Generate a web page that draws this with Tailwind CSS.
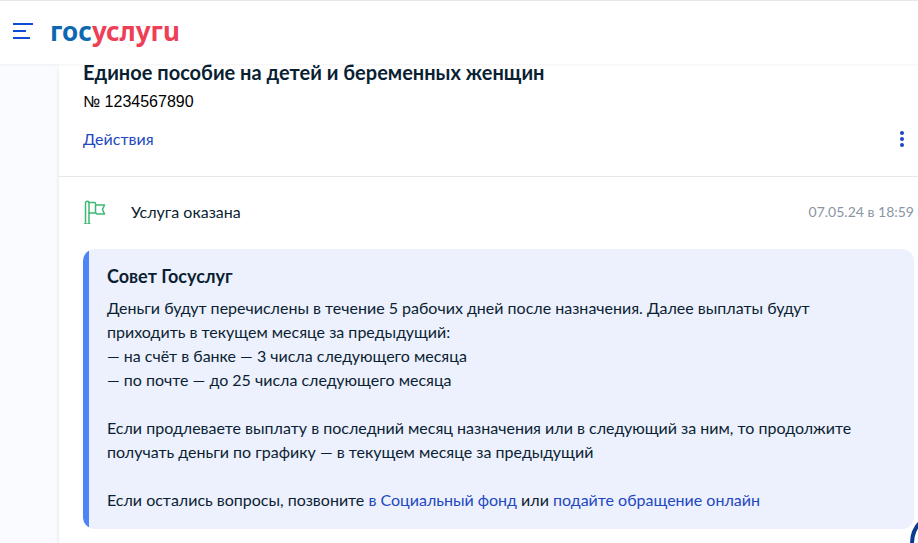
<!DOCTYPE html>
<html lang="ru">
  <head>
    <meta charset="UTF-8" />
    <meta name="viewport" content="width=device-width, initial-scale=1.0" />
    <title>Госуслуги</title>
    <script src="https://cdn.jsdelivr.net/npm/@tailwindcss/browser@4"></script>
  </head>
  <body
    class="flex flex-col min-h-screen overflow-x-hidden bg-[#fafbff] text-[#0b1f33] font-['Lato','Liberation_Sans',sans-serif]"
  >
    <header
      class="relative z-10 h-16 flex items-center gap-4 pl-3 pb-1 border-t border-gray-200 bg-white shadow-xs"
    >
      <button type="button" aria-label="Меню" class="cursor-pointer">
        <svg width="22" height="18" viewBox="0 0 22 18" fill="none" stroke="#0d4cd3" stroke-width="2">
          <path d="M1 2h20M1 9h13M1 16h17" />
        </svg>
      </button>
      <a
        href="#"
        class="text-[26px] leading-8 font-bold text-[#0d68b1] font-['Noto_Sans','Open_Sans',sans-serif]"
        >гос<span class="text-[#ee3f58]">услугu</span></a
      >
    </header>

    <main class="grow ml-[59px] bg-white shadow-md">
      <!-- заявление -->
      <section class="pl-6 pr-1 pb-[25px] border-b border-gray-200">
        <h1 class="text-xl leading-4 font-bold">
          Единое пособие на детей и беременных женщин
        </h1>
        <p class="mt-2.5 text-base text-black font-['Liberation_Sans',Arial,sans-serif]">
          № 1234567890
        </p>
        <div class="mt-[13px] flex items-center justify-between">
          <a href="#" class="text-base text-[#1d48c0]">Действия</a>
          <button type="button" aria-label="Ещё" class="px-2.5 cursor-pointer">
            <svg width="4" height="16" viewBox="0 0 4 16" fill="#1d48c0">
              <circle cx="2" cy="2" r="2" />
              <circle cx="2" cy="8" r="2" />
              <circle cx="2" cy="14" r="2" />
            </svg>
          </button>
        </div>
      </section>

      <!-- статус -->
      <section class="pl-6 pr-1 pt-[23px]">
        <div class="flex items-center">
          <svg
            class="mr-6"
            width="24"
            height="24"
            viewBox="0 0 24 24"
            fill="none"
            stroke="#3fb872"
            stroke-width="1.5"
            stroke-linejoin="round"
            stroke-linecap="round"
          >
            <path d="M2.500 24V3a1.500 1.500 0 0 1 3.500 0V24M1.500 24H7" />
            <path d="M6 2.500h5.500a1 1 0 0 1 1 1V13H6M12.500 5h9l-2 4.500 2 4.500H14l-1.500-1.500" />
          </svg>
          <p class="text-base">Услуга оказана</p>
          <time class="ml-auto text-sm text-[#8a95a3]">07.05.24 в 18:59</time>
        </div>

        <article class="mt-[25px] flex rounded-xl bg-[#edf0fd] overflow-hidden">
          <div class="w-1.5 shrink-0 bg-[#4e84f5]"></div>
          <div class="pl-[18px] pr-8 pt-[15px] pb-[17px]">
            <h2 class="mb-2 text-lg leading-6 font-bold">Совет Госуслуг</h2>
            <p class="text-base">
              Деньги будут перечислены в течение 5 рабочих дней после
              назначения. Далее выплаты будут приходить в текущем месяце за
              предыдущий:<br />
              — на счёт в банке — 3 числа следующего месяца<br />
              — по почте — до 25 числа следующего месяца
            </p>
            <p class="mt-6 text-base">
              Если продлеваете выплату в последний месяц назначения или в
              следующий за ним, то продолжите получать деньги по графику — в
              текущем месяце за предыдущий
            </p>
            <p class="mt-6 text-base">
              Если остались вопросы, позвоните
              <a href="#" class="text-[#1d48c0]">в Социальный фонд</a> или
              <a href="#" class="text-[#1d48c0]">подайте обращение онлайн</a>
            </p>
          </div>
        </article>
      </section>
    </main>

    <!-- чат -->
    <button
      type="button"
      aria-label="Чат"
      class="fixed -right-14 -bottom-8 size-16 rounded-full border-4 border-[#0b3a8f] bg-white cursor-pointer"
    ></button>
  </body>
</html>
